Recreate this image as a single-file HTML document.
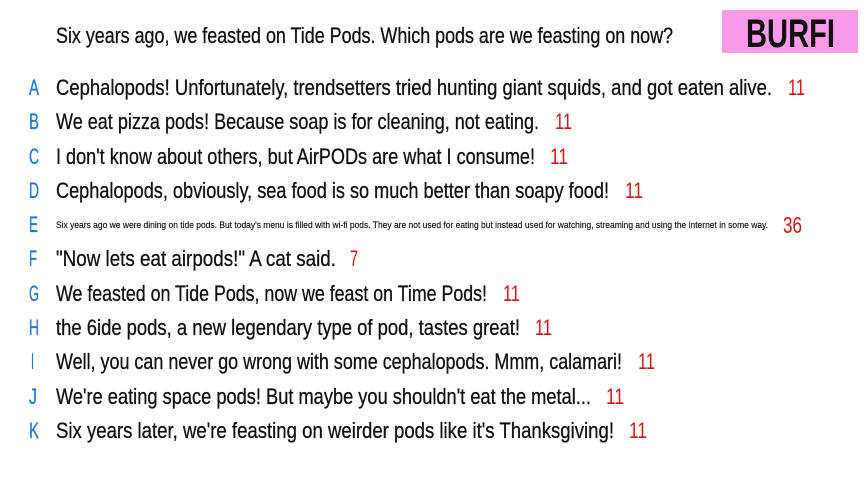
<!DOCTYPE html>
<html><head><meta charset="utf-8"><style>
html,body{margin:0;padding:0;background:#fff;width:864px;height:482px;overflow:hidden}
svg{display:block}
text{font-family:"Liberation Sans Narrow","Liberation Sans",sans-serif}
</style></head><body>
<svg width="864" height="482" viewBox="0 0 864 482">
<rect x="722" y="10" width="136" height="43" fill="#f79ae8"/>
<text x="746" y="47" font-size="40" font-weight="bold" fill="#111" textLength="89" lengthAdjust="spacingAndGlyphs">BURFI</text>
<text x="56" y="43" font-size="22" fill="#111" stroke="#111" stroke-width="0.3" textLength="617" lengthAdjust="spacingAndGlyphs">Six years ago, we feasted on Tide Pods. Which pods are we feasting on now?</text>
<g font-size="22" fill="#111" stroke="#111" stroke-width="0.3">
<g fill="#1a7ae0" stroke="#1a7ae0">
<text x="29" y="95" textLength="10" lengthAdjust="spacingAndGlyphs">A</text><text x="29" y="129" textLength="10" lengthAdjust="spacingAndGlyphs">B</text><text x="29" y="164" textLength="10" lengthAdjust="spacingAndGlyphs">C</text><text x="29" y="198" textLength="10" lengthAdjust="spacingAndGlyphs">D</text><text x="29" y="232" textLength="9" lengthAdjust="spacingAndGlyphs">E</text><text x="29" y="266" textLength="8" lengthAdjust="spacingAndGlyphs">F</text><text x="29" y="301" textLength="10" lengthAdjust="spacingAndGlyphs">G</text><text x="29" y="335" textLength="10" lengthAdjust="spacingAndGlyphs">H</text><text x="31" y="369" textLength="3" lengthAdjust="spacingAndGlyphs">I</text><text x="29" y="404" textLength="8" lengthAdjust="spacingAndGlyphs">J</text><text x="29" y="438" textLength="10" lengthAdjust="spacingAndGlyphs">K</text>
</g>
<text x="56" y="95" textLength="716" lengthAdjust="spacingAndGlyphs">Cephalopods! Unfortunately, trendsetters tried hunting giant squids, and got eaten alive.</text>
<text x="56" y="129" textLength="483" lengthAdjust="spacingAndGlyphs">We eat pizza pods! Because soap is for cleaning, not eating.</text>
<text x="56" y="164" textLength="479" lengthAdjust="spacingAndGlyphs">I don't know about others, but AirPODs are what I consume!</text>
<text x="56" y="198" textLength="553" lengthAdjust="spacingAndGlyphs">Cephalopods, obviously, sea food is so much better than soapy food!</text>
<text x="56" y="228" font-size="9" stroke-width="0.15" textLength="712" lengthAdjust="spacingAndGlyphs">Six years ago we were dining on tide pods. But today's menu is filled with wi-fi pods. They are not used for eating but instead used for watching, streaming and using the internet in some way.</text>
<text x="56" y="266" textLength="280" lengthAdjust="spacingAndGlyphs">"Now lets eat airpods!" A cat said.</text>
<text x="56" y="301" textLength="431" lengthAdjust="spacingAndGlyphs">We feasted on Tide Pods, now we feast on Time Pods!</text>
<text x="56" y="335" textLength="464" lengthAdjust="spacingAndGlyphs">the 6ide pods, a new legendary type of pod, tastes great!</text>
<text x="56" y="369" textLength="566" lengthAdjust="spacingAndGlyphs">Well, you can never go wrong with some cephalopods. Mmm, calamari!</text>
<text x="56" y="404" textLength="535" lengthAdjust="spacingAndGlyphs">We're eating space pods! But maybe you shouldn't eat the metal...</text>
<text x="56" y="438" textLength="558" lengthAdjust="spacingAndGlyphs">Six years later, we're feasting on weirder pods like it's Thanksgiving!</text>
<g fill="#e01010" stroke="none">
<text x="788" y="95" textLength="17" lengthAdjust="spacingAndGlyphs">11</text>
<text x="555" y="129" textLength="17" lengthAdjust="spacingAndGlyphs">11</text>
<text x="550" y="164" textLength="18" lengthAdjust="spacingAndGlyphs">11</text>
<text x="625" y="198" textLength="18" lengthAdjust="spacingAndGlyphs">11</text>
<text x="783" y="233" font-size="23" textLength="19" lengthAdjust="spacingAndGlyphs">36</text>
<text x="350" y="266" textLength="8" lengthAdjust="spacingAndGlyphs">7</text>
<text x="503" y="301" textLength="17" lengthAdjust="spacingAndGlyphs">11</text>
<text x="535" y="335" textLength="17" lengthAdjust="spacingAndGlyphs">11</text>
<text x="638" y="369" textLength="17" lengthAdjust="spacingAndGlyphs">11</text>
<text x="606" y="404" textLength="18" lengthAdjust="spacingAndGlyphs">11</text>
<text x="629" y="438" textLength="18" lengthAdjust="spacingAndGlyphs">11</text>
</g>
</g>
</svg>
</body></html>
